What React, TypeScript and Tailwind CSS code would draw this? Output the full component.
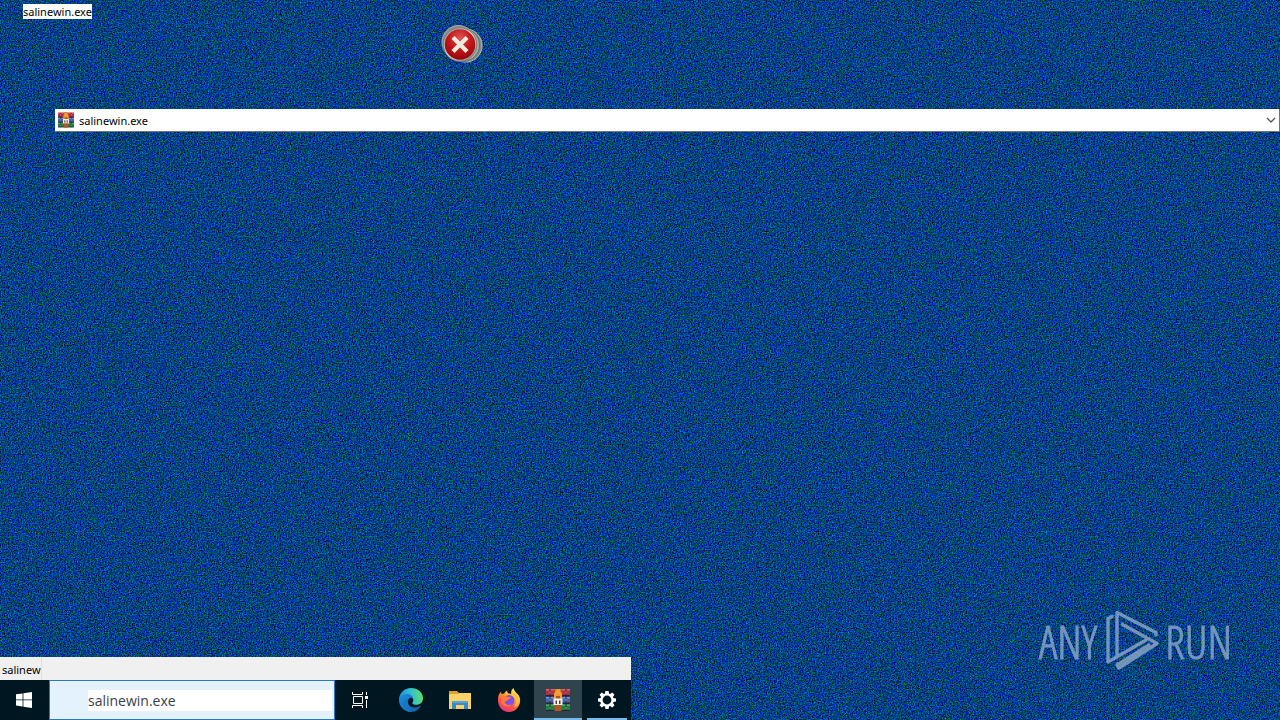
import type { ReactNode } from "react";

const FILE_NAME = "salinewin.exe";

function Noise() {
  return (
    <svg className="absolute inset-0 h-full w-full" aria-hidden="true">
      <filter id="static" x="0" y="0" width="100%" height="100%" colorInterpolationFilters="sRGB">
        <feTurbulence type="fractalNoise" baseFrequency="0.71 0.77" numOctaves="3" seed="7" />
        <feColorMatrix
          type="matrix"
          values="0.2 0 0 0 -0.1
                  0 0.95 0 0 -0.22
                  0 0 1.7 0 -0.34
                  0 0 0 0 1"
        />
      </filter>
      <rect width="100%" height="100%" fill="#003d88" filter="url(#static)" />
    </svg>
  );
}

function ErrorIcon({ className }: { className: string }) {
  return (
    <svg className={className} viewBox="0 0 42 40" aria-hidden="true">
      <defs>
        <radialGradient id="red" cx="50%" cy="30%" r="75%">
          <stop offset="0" stopColor="#df5655" />
          <stop offset="0.5" stopColor="#c4151b" />
          <stop offset="1" stopColor="#8d0508" />
        </radialGradient>
        <linearGradient id="rim" x1="0" y1="0" x2="1" y2="1">
          <stop offset="0" stopColor="#8d8f8c" />
          <stop offset="0.5" stopColor="#d9d9d3" />
          <stop offset="1" stopColor="#777b78" />
        </linearGradient>
      </defs>
      <circle cx="24.5" cy="21.5" r="16.6" fill="#858985" stroke="#b9bcb5" />
      <circle cx="22" cy="21" r="16.5" fill="#a9aca7" stroke="#626b68" />
      <circle cx="17.5" cy="18" r="16.5" fill="#8b8d88" stroke="#a9aba5" />
      <circle cx="19" cy="20.5" r="16.8" fill="url(#rim)" stroke="#747a75" />
      <circle cx="19" cy="20.5" r="15.2" fill="url(#red)" />
      <path d="M12 13.5l14 14m0-14l-14 14" stroke="#ededdf" strokeWidth="4.2" />
    </svg>
  );
}

function ArchiveIcon({ className }: { className: string }) {
  return (
    <svg className={className} viewBox="0 0 24 24" aria-hidden="true">
      <path d="M0 1h24v7H0z" fill="#c02a48" />
      <path d="M0 8.5h24v7H0z" fill="#4264b7" />
      <path d="M0 16h24v7H0z" fill="#1f7f3c" />
      <path d="M0 1h24v1.5H0z" fill="#e0606c" />
      <path d="M0 9h24v1.5H0z" fill="#7993df" />
      <path d="M0 16.5h24V18H0z" fill="#44a858" />
      <path d="M0 7h24v1.5H0zM0 14.5h24V16H0zM0 22h24v1H0z" fill="#242332" />
      <path d="M3 1h2v22H3zM19 1h2v22h-2z" fill="#222c42" opacity=".5" />
      <path d="M3.5 3.5h1v2h-1zM19.5 3.5h1v2h-1zM3.5 11h1v2h-1zM19.5 11h1v2h-1zM3.5 19h1v2h-1zM19.5 19h1v2h-1z" fill="#c89a5a" />
      <path d="M8.5 1h7v22h-7z" fill="#aa5428" />
      <path d="M9.5 1h5v7h-5z" fill="#ef9b35" />
      <path d="M9.5 18h5v5h-5z" fill="#b2562a" />
      <path d="M9 11V7a3 3 0 016 0v4" fill="none" stroke="#f4a332" strokeWidth="2" />
      <path d="M7.5 10.5h9V17h-9z" fill="#f8f1e5" />
      <path d="M9.5 12.5H11V16H9.5zM13 12.5h1.5V16H13z" fill="#514143" />
    </svg>
  );
}

function WindowsIcon() {
  return (
    <svg className="size-4" viewBox="0 0 16 16" fill="#fff" aria-hidden="true">
      <path d="M0 2.3l6.6-.9v6.1H0zM7.4 1.3L16 0v7.5H7.4zM0 8.3h6.6v6.2L0 13.6zM7.4 8.3H16V16l-8.6-1.3z" />
    </svg>
  );
}

function TaskViewIcon() {
  return (
    <svg className="size-4" viewBox="0 0 16 16" fill="none" stroke="#fff" aria-hidden="true">
      <path d="M.5 0v2.5h10V0M.5 16v-2.5h10V16M1.5 4.5h9v7h-9zM14.5 0v3M14.5 8v8" />
      <path d="M13 4h3v3h-3z" fill="#fff" stroke="none" />
    </svg>
  );
}

function EdgeIcon() {
  return (
    <svg className="size-6" viewBox="0 0 24 24" aria-hidden="true">
      <defs>
        <linearGradient id="edge-top" x1="0" y1="0.5" x2="1" y2="0.4">
          <stop offset="0" stopColor="#1f92d8" />
          <stop offset="0.5" stopColor="#30bfd3" />
          <stop offset="1" stopColor="#62df62" />
        </linearGradient>
        <linearGradient id="edge-low" x1="0" y1="0" x2="1" y2="1">
          <stop offset="0" stopColor="#1990df" />
          <stop offset="1" stopColor="#145aa8" />
        </linearGradient>
      </defs>
      <path d="M0 12C0 5 5.3 0 12 0c7 0 12 4.7 12 10.2 0 4.2-3 6.5-6.6 6.5-2.7 0-4.1-.9-4.1-1.8 0-.7 1-1.2 1-3 0-2.4-2.4-4.3-5.4-4.3C4.5 7.6 1.5 10 0 12z" fill="url(#edge-top)" />
      <path d="M0 12c0-3 3.5-5.9 8-5.9 4 0 6.3 2.7 6.3 5.5-1-1.7-2.5-2.3-4-1.2-3.4 2.7-.8 9 5.1 9.1 2.8 0 4.6-.7 6.6-1.9C20 21.5 16.5 24 12 24 5.4 24 0 18.7 0 12z" fill="url(#edge-low)" />
      <path d="M9.5 10.9C5 14 6.5 20.5 12.6 23.9 6 24.3 2.8 18.3 4.3 14.6c1-2.5 3-3.6 5.2-3.7z" fill="#1477c5" />
    </svg>
  );
}

function FolderIcon() {
  return (
    <svg className="h-5 w-6" viewBox="0 0 24 20" aria-hidden="true">
      <path d="M1 1h8l2 2h12v16H1z" fill="#dba327" />
      <path d="M1 4h9l2-1h11v16H1z" fill="#f8d268" />
      <path d="M5 11h14l1 1v7h-4v-4H8v4H4v-7z" fill="#398bc7" />
      <path d="M5 11h14v2H5z" fill="#56a5d8" />
    </svg>
  );
}

function FirefoxIcon() {
  return (
    <svg className="size-6" viewBox="0 0 24 24" aria-hidden="true">
      <defs>
        <linearGradient id="fox" x1="0.8" y1="0" x2="0.2" y2="1">
          <stop offset="0" stopColor="#fff45a" />
          <stop offset="0.35" stopColor="#ffb52e" />
          <stop offset="0.65" stopColor="#ff5645" />
          <stop offset="1" stopColor="#e52e8e" />
        </linearGradient>
      </defs>
      <path d="M1 10.5C1.2 7.5 2.3 5.3 4 3.8c0 1 .2 1.7.7 2.3.8-.4 1.6-.6 2.5-.6.7-1.4 1.8-2.4 3-3-.1 1 .1 2 1 2.8l3 .8C13.8 3.5 14.7 1.4 16.5 0c.4 2.8 2.3 4.2 4 6 2 2 3 4.3 2.5 8-.8 6-5.5 10-11 10C5 24 .4 18.2 1 10.5z" fill="url(#fox)" />
      <circle cx="12" cy="12.5" r="5.5" fill="#8151e5" />
      <path d="M4 9c2-1.8 4.4-1.7 6.5 0h3.2c-.4 1.7-1.6 2.3-3 2.7-.7 1.4-2.2 1.7-3.2 2 .8 3.2 4 4.2 7.2 2.2C13 20 5.5 19 4 14z" fill="#ff7c35" />
      <path d="M15.5 6c4.5 3.2 5 9.6 1.3 13.3C23.5 17 23.1 9.5 18 5.5z" fill="#ffc03d" />
    </svg>
  );
}

function GearIcon() {
  return (
    <svg className="size-5" viewBox="-10 -10 20 20" aria-hidden="true">
      <circle r="5.6" fill="none" stroke="#fff" strokeWidth="2.4" />
      <g fill="#fff">
        <path d="M-1.6-9h3.2l.5 3h-4.2zM-1.6 9h3.2l.5-3h-4.2zM-9-1.6v3.2l3 .5v-4.2zM9-1.6v3.2l-3 .5v-4.2z" />
        <path transform="rotate(45)" d="M-1.6-9h3.2l.5 3h-4.2zM-1.6 9h3.2l.5-3h-4.2zM-9-1.6v3.2l3 .5v-4.2zM9-1.6v3.2l-3 .5v-4.2z" />
      </g>
    </svg>
  );
}

function PlayMark() {
  return (
    <svg
      className="h-[62px] w-14"
      viewBox="0 0 56 62"
      fill="none"
      stroke="currentColor"
      strokeWidth="3.4"
      strokeLinecap="round"
      strokeLinejoin="round"
      aria-hidden="true"
    >
      <path d="M7 6.5L3 8.5V52L41 30" />
      <path d="M12 46V2.5L51 22.5V25" />
      <path d="M17.5 14.5L52 33.5L14 58L12 55L44 35" />
    </svg>
  );
}

function TaskButton({ label, className = "", children }: { label: string; className?: string; children: ReactNode }) {
  return (
    <button
      type="button"
      aria-label={label}
      className={`flex w-12 shrink-0 items-center justify-center border-b-2 pt-0.5 ${className || "border-transparent"}`}
    >
      {children}
    </button>
  );
}

export default function App() {
  return (
    <div className="relative isolate flex min-h-screen flex-col overflow-hidden bg-[#003d88] font-['Noto_Sans',sans-serif] text-black">
      <div className="absolute inset-0 -z-10">
        <Noise />
      </div>

      <span className="absolute left-[23px] top-1 bg-white text-[11px] leading-[15px]">{FILE_NAME}</span>
      <ErrorIcon className="absolute left-[441px] top-6 h-10 w-[42px]" />

      <main className="flex-1 pl-[55px] pt-[109px]">
        <div className="flex h-[23px] items-center border-r border-b border-[#6c7480] bg-white pl-[3px]">
          <ArchiveIcon className="size-4 shrink-0" />
          <input
            aria-label="Address"
            defaultValue={FILE_NAME}
            className="ml-[5px] h-full min-w-0 flex-1 bg-transparent text-[11px] leading-4 outline-none"
          />
          <button type="button" aria-label="Show previous locations" className="flex h-full w-4 items-center justify-center">
            <svg className="h-2 w-2.5" viewBox="0 0 10 8" fill="none" stroke="#555" strokeWidth="1.3" aria-hidden="true">
              <path d="M1 2l4 4 4-4" />
            </svg>
          </button>
        </div>
      </main>

      <div className="absolute bottom-12 right-12 flex items-center gap-1 font-['Open_Sans_Condensed_Light','Open_Sans_Condensed','Liberation_Sans_Narrow',sans-serif] text-[46px] leading-none font-light text-[#9ab0d0] opacity-75 [-webkit-text-stroke:1px_currentColor]">
        <span>ANY</span>
        <span className="pl-1"><PlayMark /></span>
        <span>RUN</span>
      </div>

      <footer className="w-fit">
        <div className="flex h-[23px] items-center bg-[#f0f0f0]">
          <span className="w-[42px] overflow-hidden border-r border-[#dedede] pl-0.5 pt-0.5 text-[11px] leading-[21px]">salinew</span>
        </div>
        <nav aria-label="Taskbar" className="flex h-10 bg-[#001721]">
          <button type="button" aria-label="Start" className="flex w-12 items-center justify-center">
            <WindowsIcon />
          </button>
          <div className="ml-px mr-px flex w-[286px] items-center border border-[#2b78bd] bg-[#e3f2fd] pl-[38px] pr-0.5">
            <input
              aria-label="Search"
              defaultValue={FILE_NAME}
              className="h-[21px] min-w-0 flex-1 bg-white font-['Open_Sans',sans-serif] text-sm leading-5 text-[#3a4247] outline-none"
            />
          </div>
          <div className="flex gap-px">
            <TaskButton label="Task View" className="mr-0.5 border-transparent"><TaskViewIcon /></TaskButton>
            <TaskButton label="Microsoft Edge"><EdgeIcon /></TaskButton>
            <TaskButton label="File Explorer"><FolderIcon /></TaskButton>
            <TaskButton label="Firefox"><FirefoxIcon /></TaskButton>
            <TaskButton label="WinRAR" className="border-[#76b9ed] bg-[#30444e]"><ArchiveIcon className="size-6" /></TaskButton>
            <div className="flex w-12 flex-col items-center">
              <button type="button" aria-label="Settings" className="flex w-full flex-1 items-center justify-center pt-0.5"><GearIcon /></button>
              <span className="h-0.5 w-10 bg-[#76b9ed]" />
            </div>
          </div>
        </nav>
      </footer>
    </div>
  );
}
